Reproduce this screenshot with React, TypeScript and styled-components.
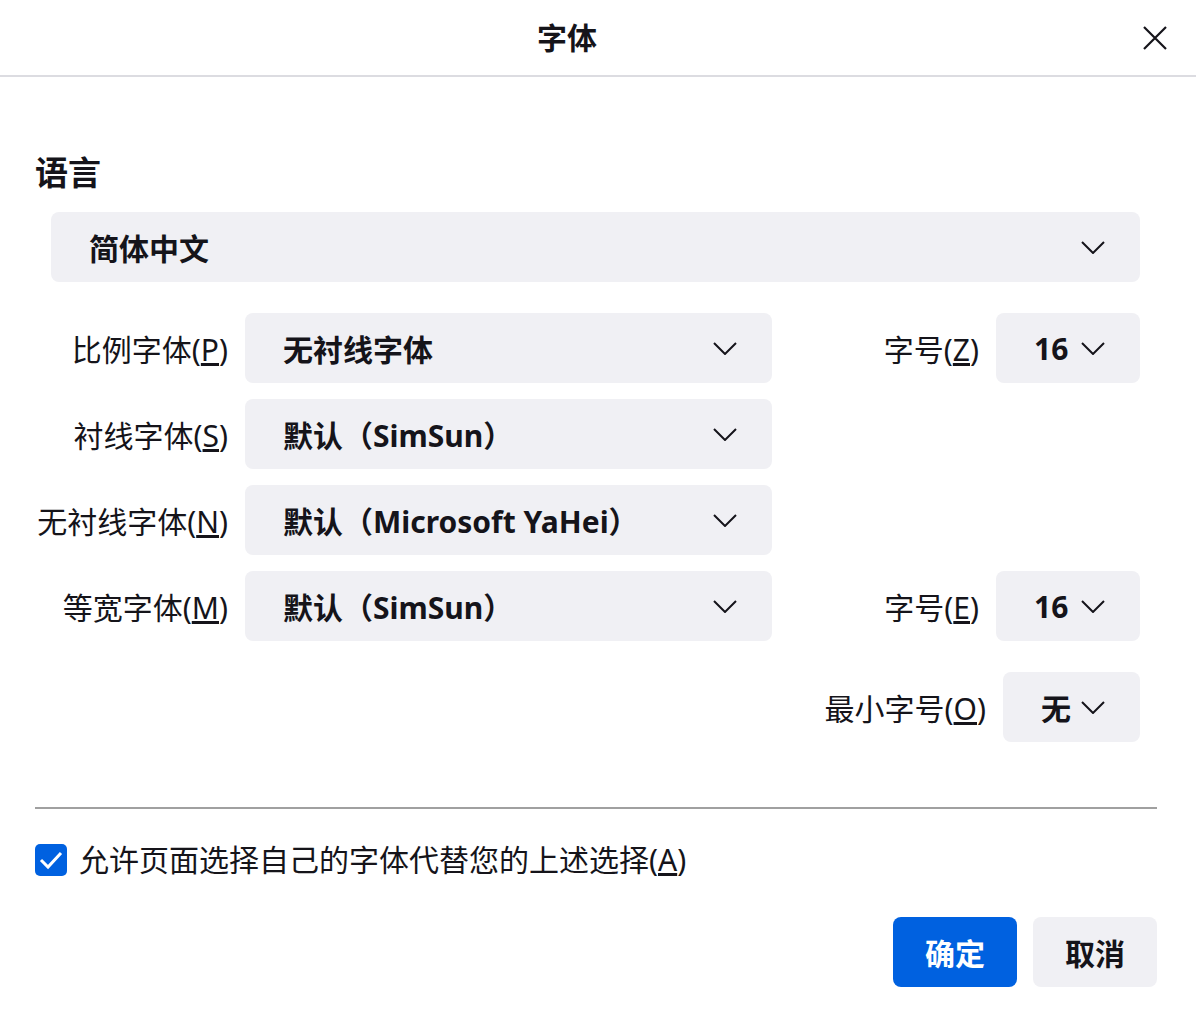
import React from "react";
import styled, { createGlobalStyle } from "styled-components";

const GlobalStyle = createGlobalStyle`
  html, body {
    margin: 0;
    padding: 0;
    background: #ffffff;
  }
  body {
    font-family: "Noto Sans", "Noto Sans CJK SC", sans-serif;
    color: #15141a;
  }
`;

const Dialog = styled("div")`
  width: 1196px;
  min-height: 1012px;
  background: #ffffff;
`;

const Header = styled("div")`
  display: flex;
  align-items: center;
  height: 75px;
  border-bottom: 2px solid #dcdce1;
`;

const Title = styled("h1")`
  flex: 1;
  margin: 0;
  text-align: center;
  font-size: 30px;
  font-weight: 700;
  line-height: 40px;
`;

const CloseButton = styled("button")`
  margin: 0 29px 0 9px;
  width: 24px;
  height: 24px;
  padding: 0;
  border: none;
  background: none;
  display: flex;
  color: #15141a;
`;

const Body = styled("div")`
  padding: 0 39px 0 35px;
`;

const Heading = styled("h2")`
  margin: 76px 0 19px;
  font-size: 33px;
  font-weight: 700;
  line-height: 40px;
`;

const Select = styled("div")<{ $width?: number }>`
  display: flex;
  align-items: center;
  justify-content: space-between;
  box-sizing: border-box;
  height: 70px;
  width: ${(p) => (p.$width ? `${p.$width}px` : "auto")};
  flex: ${(p) => (p.$width ? "none" : "1")};
  padding: 0 35px 0 38px;
  background: #f0f0f4;
  border-radius: 8px;
  font-size: 30px;
  font-weight: 700;
  white-space: nowrap;
`;

const LangSelect = styled(Select)`
  margin: 0 17px 31px 16px;
`;

const Rows = styled("div")`
  display: flex;
  flex-direction: column;
  gap: 16px;
  padding-right: 17px;
`;

const Row = styled("div")<{ $extra?: boolean }>`
  display: flex;
  align-items: center;
  margin-top: ${(p) => (p.$extra ? "15px" : "0")};
`;

const Label = styled("label")<{ $width?: number }>`
  width: ${(p) => (p.$width ? `${p.$width}px` : "auto")};
  margin-right: 17px;
  text-align: right;
  font-size: 30px;
  white-space: nowrap;
`;

const SizeGroup = styled("div")`
  margin-left: auto;
  display: flex;
  align-items: center;
`;

const Divider = styled("hr")`
  margin: 65px 0 35px;
  border: none;
  height: 2px;
  background: #a0a0a0;
`;

const CheckRow = styled("label")`
  display: flex;
  align-items: center;
  gap: 12px;
  font-size: 30px;
  line-height: 32px;
`;

const CheckBox = styled("span")`
  display: flex;
  align-items: center;
  justify-content: center;
  width: 32px;
  height: 32px;
  border-radius: 5px;
  background: #0061e0;
`;

const Buttons = styled("div")`
  display: flex;
  justify-content: flex-end;
  gap: 16px;
  margin-top: 41px;
`;

const Button = styled("button")<{ $primary?: boolean }>`
  width: 124px;
  height: 70px;
  border: none;
  border-radius: 8px;
  font-family: inherit;
  font-size: 30px;
  font-weight: 700;
  background: ${(p) => (p.$primary ? "#0061e0" : "#f0f0f4")};
  color: ${(p) => (p.$primary ? "#ffffff" : "#15141a")};
`;

const Chevron = () => (
  <svg width="24" height="13" viewBox="0 0 24 13" fill="none">
    <polyline points="1,1 12,12 23,1" stroke="#15141a" strokeWidth="2" />
  </svg>
);

const SmallSelect = ({ value, width }: { value: string; width: number }) => (
  <Select $width={width}>
    <span>{value}</span>
    <Chevron />
  </Select>
);

export default function App() {
  return (
    <>
      <GlobalStyle />
      <Dialog>
        <Header>
          <Title>字体</Title>
          <CloseButton aria-label="关闭">
            <svg width="24" height="24" viewBox="0 0 24 24" fill="none">
              <path d="M1 1 L23 23 M23 1 L1 23" stroke="#15141a" strokeWidth="2.2" />
            </svg>
          </CloseButton>
        </Header>
        <Body>
          <Heading>语言</Heading>
          <LangSelect>
            <span>简体中文</span>
            <Chevron />
          </LangSelect>
          <Rows>
            <Row>
              <Label $width={193}>
                比例字体(<u>P</u>)
              </Label>
              <Select $width={527}>
                <span>无衬线字体</span>
                <Chevron />
              </Select>
              <SizeGroup>
                <Label>
                  字号(<u>Z</u>)
                </Label>
                <SmallSelect value="16" width={144} />
              </SizeGroup>
            </Row>
            <Row>
              <Label $width={193}>
                衬线字体(<u>S</u>)
              </Label>
              <Select $width={527}>
                <span>默认（SimSun）</span>
                <Chevron />
              </Select>
            </Row>
            <Row>
              <Label $width={193}>
                无衬线字体(<u>N</u>)
              </Label>
              <Select $width={527}>
                <span>默认（Microsoft YaHei）</span>
                <Chevron />
              </Select>
            </Row>
            <Row>
              <Label $width={193}>
                等宽字体(<u>M</u>)
              </Label>
              <Select $width={527}>
                <span>默认（SimSun）</span>
                <Chevron />
              </Select>
              <SizeGroup>
                <Label>
                  字号(<u>E</u>)
                </Label>
                <SmallSelect value="16" width={144} />
              </SizeGroup>
            </Row>
            <Row $extra>
              <SizeGroup>
                <Label>
                  最小字号(<u>O</u>)
                </Label>
                <SmallSelect value="无" width={137} />
              </SizeGroup>
            </Row>
          </Rows>
          <Divider />
          <CheckRow>
            <CheckBox>
              <svg width="24" height="20" viewBox="0 0 24 20" fill="none">
                <polyline points="2,10 9,17 22,3" stroke="#ffffff" strokeWidth="3" />
              </svg>
            </CheckBox>
            <span>
              允许页面选择自己的字体代替您的上述选择(<u>A</u>)
            </span>
          </CheckRow>
          <Buttons>
            <Button $primary>确定</Button>
            <Button>取消</Button>
          </Buttons>
        </Body>
      </Dialog>
    </>
  );
}
